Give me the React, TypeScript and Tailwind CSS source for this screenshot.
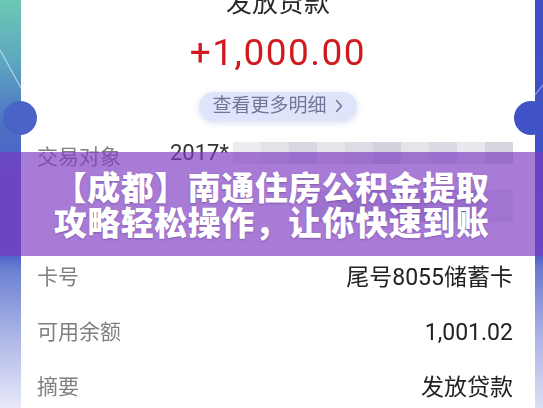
import React from "react";

const cjk = { fontFamily: "Roboto, 'Noto Sans CJK SC', sans-serif" };

function Mosaic({ w, h, cells }: { w: number; h: number; cells: string[] }) {
  return (
    <div className="flex" style={{ width: w, height: h }}>
      {cells.map((c, i) => (
        <div key={i} className="flex-1 h-full" style={{ background: c }} />
      ))}
    </div>
  );
}

export default function App() {
  return (
    <div className="relative w-[543px] h-[408px] overflow-hidden bg-white" style={cjk}>
      <div className="flex w-full h-full blur-[0.5px]">
        {/* left strip */}
        <div className="relative w-[21px] shrink-0 bg-[linear-gradient(180deg,#6cc8b4_0%,#5eaac0_14%,#4c72c4_30%,#4a5cc6_45%,#4c5cc6_62%,#6a7fd2_66%,#aab4e6_82%,#e8e9f8_100%)]">
          <svg className="absolute left-0 top-0" width="21" height="100" viewBox="0 0 21 100">
            <line x1="0" y1="50" x2="21" y2="88" stroke="rgba(255,255,255,0.55)" strokeWidth="1.2" />
          </svg>
        </div>

        {/* card */}
        <div className="flex-1 flex flex-col items-center bg-white">
          <div className="mt-[-12px] h-[30px] leading-[30px] text-[26px] text-[#2a2a2a]">发放贷款</div>
          <div
            className="mt-[14px] h-[42px] leading-[42px] text-[37px] tracking-[1.5px] text-[#d01a1f]"
            style={{ fontFamily: "Roboto, sans-serif" }}
          >
            +1,000.00
          </div>
          <div className="mt-[18px] w-[158px] h-[34px] rounded-full bg-[#dfe4fa] shadow-[0_2px_6px_rgba(120,130,200,0.25)] flex items-center justify-center gap-[9px] text-[19px] text-[#6f7796]">
            <span>查看更多明细</span>
            <svg width="8" height="14" viewBox="0 0 8 14">
              <path d="M1.5 1.5 L6.5 7 L1.5 12.5" fill="none" stroke="#6f7796" strokeWidth="1.6" strokeLinecap="round" strokeLinejoin="round" />
            </svg>
          </div>

          <div className="mt-[9px] w-full pl-[16px] pr-[22px] flex flex-col">
            <div className="h-[121px] flex items-start">
              <div className="w-[133px] shrink-0 pt-[12px] text-[21px] text-[#808080]">交易对象</div>
              <div className="flex-1 flex flex-col items-end pt-[10px]">
                <div className="flex items-center w-full">
                  <span className="text-[22px] text-[#333] leading-[26px]">2017*</span>
                  <div className="ml-[4px] flex-1 flex justify-end">
                    <Mosaic w={280} h={22} cells={["#ececf0", "#e2e2e8", "#d8d8e0", "#e6e6ea", "#dcdce4", "#d2d2dc", "#e4e4ea", "#dadae2", "#e8e8ee", "#d6d6de"]} />
                  </div>
                </div>
                <div className="mt-[24px]">
                  <Mosaic w={205} h={32} cells={["#e4e4ea", "#d4d4dc", "#dcdce4", "#cfcfd8", "#e0e0e8", "#d6d6de", "#eaeaee"]} />
                </div>
              </div>
            </div>
            <div className="h-[55px] flex items-center justify-between">
              <span className="text-[21px] text-[#808080]">卡号</span>
              <span className="text-[23px] text-[#222]">尾号8055储蓄卡</span>
            </div>
            <div className="h-[55px] flex items-center justify-between">
              <span className="text-[21px] text-[#808080]">可用余额</span>
              <span className="text-[23px] text-[#222]">1,001.02</span>
            </div>
            <div className="h-[55px] flex items-center justify-between">
              <span className="text-[21px] text-[#808080]">摘要</span>
              <span className="text-[23px] text-[#222]">发放贷款</span>
            </div>
          </div>
        </div>

        {/* right strip */}
        <div className="relative w-[12px] shrink-0 bg-[linear-gradient(180deg,#3e50c4_0%,#3f52c6_40%,#4a5cc8_62%,#6a7bd0_66%,#aab2e4_82%,#dcdff4_100%)]">
          <svg className="absolute left-0 top-0" width="12" height="100" viewBox="0 0 12 100">
            <line x1="0" y1="95" x2="12" y2="80" stroke="rgba(255,255,255,0.45)" strokeWidth="1.2" />
          </svg>
        </div>
      </div>

      {/* notches */}
      <div className="absolute left-[3px] top-[101px] w-[34px] h-[34px] rounded-full bg-[#4a63c6] blur-[0.5px]" />
      <div className="absolute left-[514px] top-[101px] w-[34px] h-[34px] rounded-full bg-[#3f52c6] blur-[0.5px]" />

      {/* title overlay */}
      <div className="absolute left-0 right-0 top-[152px] h-[104px] bg-[rgba(124,58,194,0.67)] flex flex-col items-center justify-center">
        <div
          className="text-white text-[33px] font-black leading-[35px] tracking-[0.5px] text-center"
          style={{ fontFamily: "'Noto Sans CJK SC', sans-serif", textShadow: "0 1px 2px rgba(60,20,100,0.3)" }}
        >
          <div>【成都】南通住房公积金提取</div>
          <div>攻略轻松操作，让你快速到账</div>
        </div>
      </div>
    </div>
  );
}
